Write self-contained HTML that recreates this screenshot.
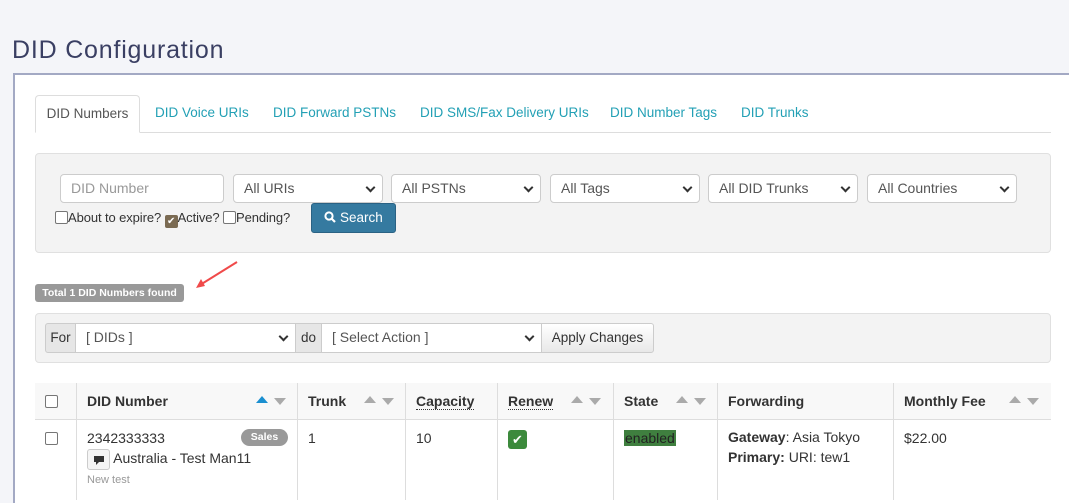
<!DOCTYPE html>
<html><head><meta charset="utf-8"><style>
*{box-sizing:border-box;margin:0;padding:0}
body{width:1069px;height:498px;overflow:hidden;background:#f4f5f9;font-family:"Liberation Sans",Arial,sans-serif;font-size:14px;color:#333;position:relative}
.a{position:absolute}
h1{position:absolute;left:12px;top:36px;font-weight:normal;font-size:25px;color:#3a3f63;letter-spacing:0.8px}
.panel{left:13px;top:73px;width:1060px;height:430px;background:#fff;border-top:2px solid #a3a9c4;border-left:2px solid #a3a9c4}
.tab{top:95px;height:38px;line-height:36px;font-size:13.5px;color:#23a0b5}
.inp{background:#fff;border:1px solid #ccc;border-radius:4px;height:29px;line-height:27px;padding-left:10px;font-size:14px;color:#555}
.sel::after{content:"";position:absolute;right:8px;top:9px;width:5px;height:5px;border-right:2px solid #333;border-bottom:2px solid #333;transform:rotate(45deg)}
.cb{display:inline-block;width:13px;height:13px;border:1px solid #767676;border-radius:2px;background:#fff;vertical-align:-2px}
.th{top:383px;height:37px;line-height:36px;font-weight:bold;font-size:14px;color:#333;padding-left:10px;border-left:1px solid #ddd}
.td{top:420px;height:80px;padding:10px 0 0 10px;border-left:1px solid #ddd;font-size:14px;color:#333}
.arr{position:absolute;top:13px;width:0;height:0;border-left:6px solid transparent;border-right:6px solid transparent}
.up{border-bottom:7px solid #aaa}.dn{border-top:7px solid #aaa}
</style></head><body>
<h1>DID Configuration</h1>
<div class="a panel"></div>
<div class="a" style="left:35px;top:132px;width:1016px;height:1px;background:#ddd"></div>
<div class="a tab" style="left:35px;width:105px;background:#fff;border:1px solid #ddd;border-bottom-color:#fff;border-radius:4px 4px 0 0;color:#555;text-align:center">DID Numbers</div>
<div class="a tab" style="left:155px">DID Voice URIs</div>
<div class="a tab" style="left:273px">DID Forward PSTNs</div>
<div class="a tab" style="left:420px">DID SMS/Fax Delivery URIs</div>
<div class="a tab" style="left:610px">DID Number Tags</div>
<div class="a tab" style="left:741px">DID Trunks</div>
<div class="a" style="left:35px;top:153px;width:1016px;height:100px;background:#f3f3f3;border:1px solid #e0e0e0;border-radius:4px"></div>
<div class="a inp" style="left:60px;top:174px;width:164px;color:#999">DID Number</div>
<div class="a inp sel" style="left:233px;top:174px;width:150px">All URIs</div>
<div class="a inp sel" style="left:391px;top:174px;width:150px">All PSTNs</div>
<div class="a inp sel" style="left:550px;top:174px;width:150px">All Tags</div>
<div class="a inp sel" style="left:708px;top:174px;width:150px">All DID Trunks</div>
<div class="a inp sel" style="left:867px;top:174px;width:150px">All Countries</div>
<div class="a" style="left:55px;top:210px;font-size:13px;color:#333;letter-spacing:-0.1px"><span class="cb"></span>About to expire? <span class="cb" style="background:#7a6a52;border-color:#7a6a52;color:#fff;font-size:10px;line-height:11px;text-align:center">✔</span>Active? <span class="cb"></span>Pending?</div>
<div class="a" style="left:311px;top:203px;width:85px;height:30px;background:#357aa0;border:1px solid #2a6284;border-radius:3px;color:#fff;line-height:28px;text-align:center;font-size:13.5px"><svg width="12" height="12" viewBox="0 0 12 12" style="vertical-align:-1px"><circle cx="5" cy="5" r="3.6" fill="none" stroke="#fff" stroke-width="2"/><path d="M7.6 7.6L11 11" stroke="#fff" stroke-width="2.2"/></svg> Search</div>
<svg class="a" style="left:190px;top:256px" width="52" height="36"><path d="M47 6L10 29" stroke="#f04a4a" stroke-width="2"/><path d="M6 32L11 23L15 30Z" fill="#f04a4a"/></svg>
<div class="a" style="left:35px;top:284px;width:149px;height:18px;background:#999;border-radius:3px;color:#fff;font-weight:bold;font-size:10.5px;line-height:18px;text-align:center">Total 1 DID Numbers found</div>
<div class="a" style="left:35px;top:313px;width:1016px;height:50px;background:#f3f3f3;border:1px solid #e0e0e0;border-radius:4px"></div>
<div class="a" style="left:45px;top:323px;width:31px;height:30px;background:#e6e6e6;border:1px solid #ccc;border-radius:3px 0 0 3px;line-height:28px;text-align:center;font-size:13.5px;color:#333">For</div>
<div class="a inp sel" style="left:75px;top:323px;width:221px;height:30px;border-radius:0">[ DIDs ]</div>
<div class="a" style="left:295px;top:323px;width:27px;height:30px;background:#e6e6e6;border:1px solid #ccc;line-height:28px;text-align:center;font-size:13.5px">do</div>
<div class="a inp sel" style="left:321px;top:323px;width:221px;height:30px;border-radius:0">[ Select Action ]</div>
<div class="a" style="left:541px;top:323px;width:113px;height:30px;background:linear-gradient(#fff,#e8e8e8);border:1px solid #ccc;border-radius:0 3px 3px 0;line-height:28px;text-align:center;font-size:13.5px">Apply Changes</div>
<div class="a" style="left:35px;top:383px;width:1016px;height:37px;background:#f8f8f8;border-bottom:1px solid #ddd"></div>
<div class="a th" style="left:35px;width:41px;border-left:none;padding-left:10px"><span class="cb" style="vertical-align:-2px"></span></div>
<div class="a th" style="left:76px;width:221px">DID Number<span class="arr" style="left:179px;border-bottom:7px solid #1a8fd0"></span><span class="arr dn" style="left:197px;top:15px"></span></div>
<div class="a th" style="left:297px;width:108px">Trunk<span class="arr up" style="left:66px"></span><span class="arr dn" style="left:84px;top:15px"></span></div>
<div class="a th" style="left:405px;width:92px"><span style="border-bottom:1px dotted #333;line-height:15px;display:inline-block">Capacity</span></div>
<div class="a th" style="left:497px;width:116px"><span style="border-bottom:1px dotted #333;line-height:15px;display:inline-block">Renew</span><span class="arr up" style="left:73px"></span><span class="arr dn" style="left:91px;top:15px"></span></div>
<div class="a th" style="left:613px;width:104px">State<span class="arr up" style="left:62px"></span><span class="arr dn" style="left:80px;top:15px"></span></div>
<div class="a th" style="left:717px;width:176px">Forwarding</div>
<div class="a th" style="left:893px;width:158px">Monthly Fee<span class="arr up" style="left:115px"></span><span class="arr dn" style="left:133px;top:15px"></span></div>
<div class="a td" style="left:35px;width:41px;border-left:none;padding-left:10px"><span class="cb"></span></div>
<div class="a td" style="left:76px;width:221px">2342333333
<span class="a" style="left:164px;top:9px;width:47px;height:17px;background:#999;border-radius:9px;color:#fff;font-weight:bold;font-size:10.5px;line-height:17px;text-align:center">Sales</span>
<div style="margin-top:3px"><span style="display:inline-block;width:23px;height:21px;border:1px solid #ccc;border-radius:3px;background:#f5f5f5;vertical-align:middle;position:relative"><span class="a" style="left:6px;top:6px;width:10px;height:6px;background:#333"></span><span class="a" style="left:8px;top:12px;border-left:3px solid #333;border-bottom:3px solid transparent"></span></span> Australia - Test Man11</div>
<div style="font-size:11px;color:#999;margin-top:4px">New test</div></div>
<div class="a td" style="left:297px;width:108px">1</div>
<div class="a td" style="left:405px;width:92px">10</div>
<div class="a td" style="left:497px;width:116px"><span style="display:inline-block;width:19px;height:19px;background:#3c8a3c;border-radius:3px;color:#fff;text-align:center;font-size:13px;line-height:19px">✔</span></div>
<div class="a td" style="left:613px;width:104px"><span style="background:#3f7f3f;color:#222;padding:0 1px">enabled</span></div>
<div class="a td" style="left:717px;width:176px;line-height:20px;padding-top:7px"><b>Gateway</b>: Asia Tokyo<br><b>Primary:</b> URI: tew1</div>
<div class="a td" style="left:893px;width:158px">$22.00</div>
</body></html>
